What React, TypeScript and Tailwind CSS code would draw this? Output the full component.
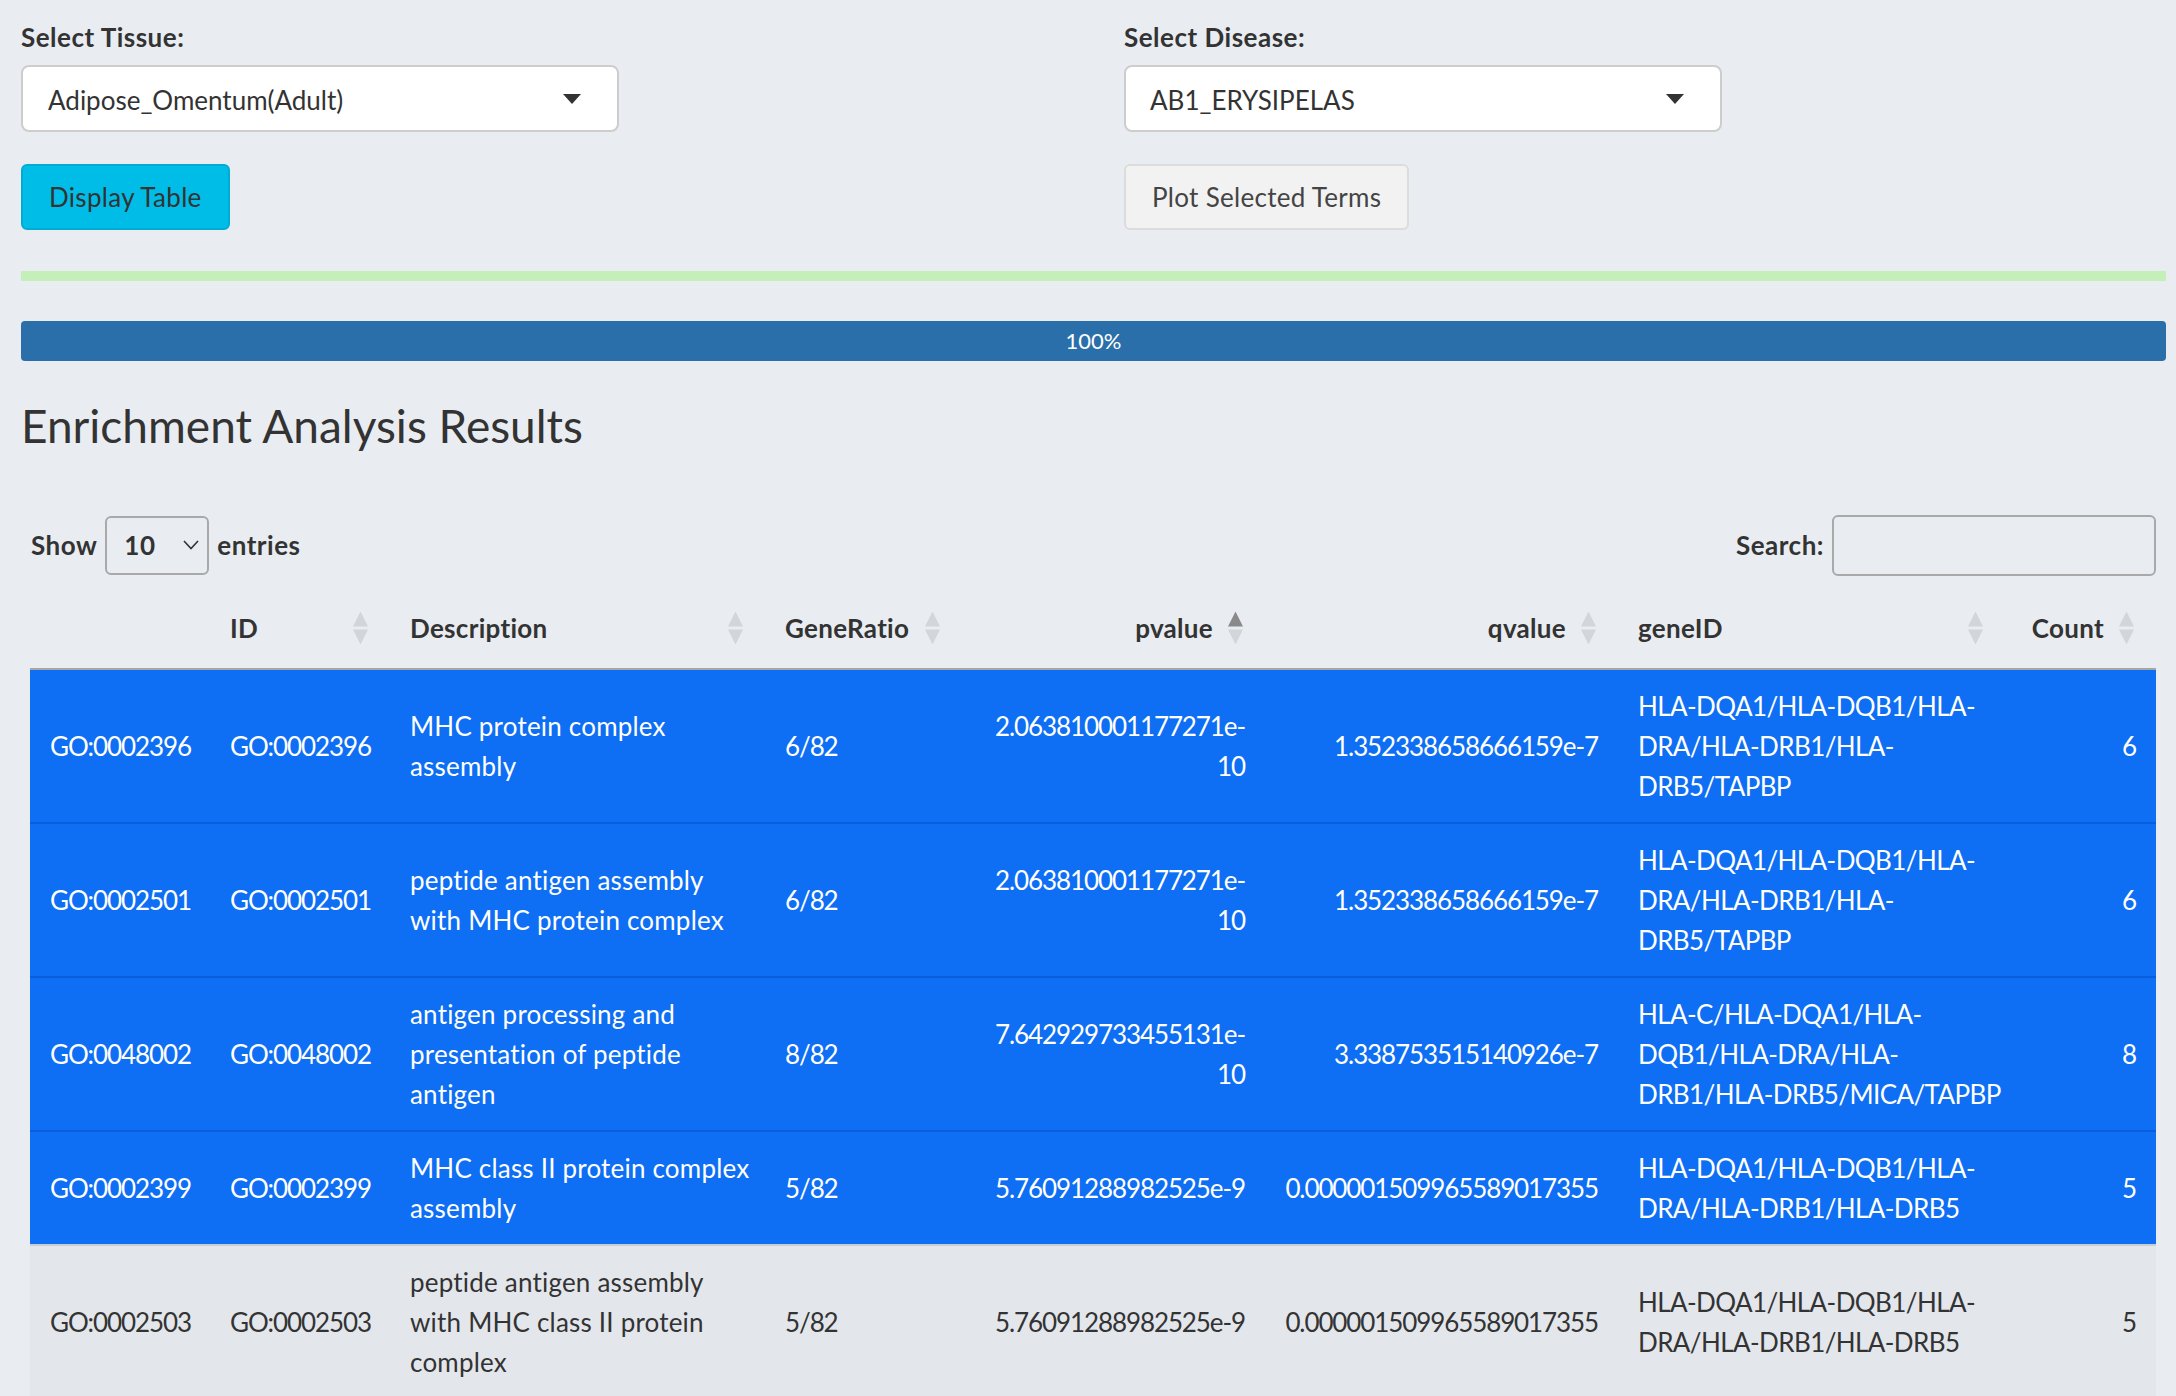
import { JSX } from "react";

type Row = {
    rn: string;
    desc: string[];
    ratio: string;
    p: string[];
    q: string;
    gene: string[];
    count: string;
    selected: boolean;
};

const rows: Row[] = [
    {
        rn: "GO:0002396",
        desc: ["MHC protein complex", "assembly"],
        ratio: "6/82",
        p: ["2.063810001177271e-", "10"],
        q: "1.352338658666159e-7",
        gene: ["HLA-DQA1/HLA-DQB1/HLA-", "DRA/HLA-DRB1/HLA-", "DRB5/TAPBP"],
        count: "6",
        selected: true,
    },
    {
        rn: "GO:0002501",
        desc: ["peptide antigen assembly", "with MHC protein complex"],
        ratio: "6/82",
        p: ["2.063810001177271e-", "10"],
        q: "1.352338658666159e-7",
        gene: ["HLA-DQA1/HLA-DQB1/HLA-", "DRA/HLA-DRB1/HLA-", "DRB5/TAPBP"],
        count: "6",
        selected: true,
    },
    {
        rn: "GO:0048002",
        desc: ["antigen processing and", "presentation of peptide", "antigen"],
        ratio: "8/82",
        p: ["7.642929733455131e-", "10"],
        q: "3.338753515140926e-7",
        gene: ["HLA-C/HLA-DQA1/HLA-", "DQB1/HLA-DRA/HLA-", "DRB1/HLA-DRB5/MICA/TAPBP"],
        count: "8",
        selected: true,
    },
    {
        rn: "GO:0002399",
        desc: ["MHC class II protein complex", "assembly"],
        ratio: "5/82",
        p: ["5.76091288982525e-9"],
        q: "0.000001509965589017355",
        gene: ["HLA-DQA1/HLA-DQB1/HLA-", "DRA/HLA-DRB1/HLA-DRB5"],
        count: "5",
        selected: true,
    },
    {
        rn: "GO:0002503",
        desc: ["peptide antigen assembly", "with MHC class II protein", "complex"],
        ratio: "5/82",
        p: ["5.76091288982525e-9"],
        q: "0.000001509965589017355",
        gene: ["HLA-DQA1/HLA-DQB1/HLA-", "DRA/HLA-DRB1/HLA-DRB5"],
        count: "5",
        selected: false,
    },
];

function SortIcon({ active }: { active?: boolean }) {
    return (
        <svg width="15" height="33" viewBox="0 0 15 33" className="absolute right-[22px] top-1/2 -translate-y-1/2">
            <polygon points="0,15 7.5,0 15,15" fill={active ? "#8a8a8a" : "#d2d5d9"} />
            <polygon points="0,18 15,18 7.5,33" fill="#d2d5d9" />
        </svg>
    );
}

function Caret() {
    return (
        <svg width="18" height="10" viewBox="0 0 18 10">
            <polygon points="0,0 18,0 9,10" fill="#333" />
        </svg>
    );
}

function Lines({ lines }: { lines: string[] }) {
    return (
        <>
            {lines.map((l, i) => (
                <div key={i} className="whitespace-nowrap">{l}</div>
            ))}
        </>
    );
}

function Header({ label, align, active, sortable = true }: { label: string; align: "left" | "right"; active?: boolean; sortable?: boolean }) {
    return (
        <th className={`relative py-5 pl-5 pr-[52px] font-bold leading-[40px] tracking-[0.3px] whitespace-nowrap ${align === "right" ? "text-right" : "text-left"}`}>
            {label}
            {sortable && <SortIcon active={active} />}
        </th>
    );
}

export default function App(): JSX.Element {
    return (
        <div className="min-h-screen bg-[#e9edf2] pl-[21px] pr-[10px] pt-[17px] text-[26px] text-[#333] font-['Lato','Noto_Sans',sans-serif]">
            <div className="flex">
                <div className="w-[1103px]">
                    <label className="block font-bold leading-[40px] tracking-[0.5px] mb-2">Select Tissue:</label>
                    <div className="flex h-[67px] w-[598px] items-center justify-between rounded-lg border-2 border-[#cdcdcd] bg-white pl-[25px] pr-[36px]">
                        <span className="pt-1">Adipose_Omentum(Adult)</span>
                        <Caret />
                    </div>
                    <button className="mt-8 h-[66px] rounded-md border-2 border-[#00acd6] bg-[#00bde8] px-[26px] tracking-[0.3px] text-[#333]">Display Table</button>
                </div>
                <div className="flex-1">
                    <label className="block font-bold leading-[40px] tracking-[0.5px] mb-2">Select Disease:</label>
                    <div className="flex h-[67px] w-[598px] items-center justify-between rounded-lg border-2 border-[#cdcdcd] bg-white pl-[24px] pr-[36px]">
                        <span className="pt-1">AB1_ERYSIPELAS</span>
                        <Caret />
                    </div>
                    <button className="mt-8 h-[66px] rounded-md border-2 border-[#dcdcdc] bg-[#f2f2f2] px-[26px] tracking-[0.3px] text-[#444]">Plot Selected Terms</button>
                </div>
            </div>

            <div className="mt-[41px] h-[10px] bg-[#c4efb9]" />
            <div className="mt-[40px] h-[40px] rounded-[4px] bg-[#2a6fa9] text-center text-[22px] leading-[40px] text-white">100%</div>

            <h3 className="mt-[37px] text-[46px] leading-[56px]">Enrichment Analysis Results</h3>

            <div className="ml-[9px] mr-[10px] mt-[60px]">
                <div className="flex h-[62px] items-center justify-between">
                    <div className="flex items-center font-bold tracking-[0.5px]">
                        <span className="ml-px">Show</span>
                        <div className="mx-2 flex h-[59px] w-[104px] items-center justify-between rounded-md border-2 border-[#a9a9a9] pl-[17px] pr-[8px]">
                            <span>10</span>
                            <svg width="16" height="10" viewBox="0 0 16 10">
                                <polyline points="1,1 8,8.5 15,1" fill="none" stroke="#333" strokeWidth="1.6" />
                            </svg>
                        </div>
                        <span>entries</span>
                    </div>
                    <div className="flex items-center font-bold tracking-[0.5px]">
                        <span className="mr-2">Search:</span>
                        <div className="h-[61px] w-[324px] rounded-md border-2 border-[#a9a9a9]" />
                    </div>
                </div>

                <table className="mt-3 w-full table-fixed border-collapse">
                    <colgroup>
                        <col className="w-[180px]" />
                        <col className="w-[180px]" />
                        <col className="w-[375px]" />
                        <col className="w-[197px]" />
                        <col className="w-[303px]" />
                        <col className="w-[353px]" />
                        <col className="w-[387px]" />
                        <col className="w-[151px]" />
                    </colgroup>
                    <thead>
                        <tr className="border-b-2 border-[#a6a6a6]">
                            <Header label="" align="left" sortable={false} />
                            <Header label="ID" align="left" />
                            <Header label="Description" align="left" />
                            <Header label="GeneRatio" align="left" />
                            <Header label="pvalue" align="right" active />
                            <Header label="qvalue" align="right" />
                            <Header label="geneID" align="left" />
                            <Header label="Count" align="right" />
                        </tr>
                    </thead>
                    <tbody>
                        {rows.map((r, i) => {
                            const td = `px-5 py-4 align-middle leading-[40px] ${i === 0 ? "" : r.selected ? "border-t-2 border-[#0a5edb]" : "border-t-2 border-[#c9ced4]"}`;
                            const num = `${td} tracking-[-1.1px]`;
                            return (
                                <tr key={i} className={r.selected ? "bg-[#0e6ef4] text-white" : "bg-[#e3e7ec] text-[#333]"}>
                                    <td className={num}>{r.rn}</td>
                                    <td className={num}>{r.rn}</td>
                                    <td className={`${td} tracking-[0.2px]`}><Lines lines={r.desc} /></td>
                                    <td className={num}>{r.ratio}</td>
                                    <td className={`${num} text-right`}><Lines lines={r.p} /></td>
                                    <td className={`${num} text-right whitespace-nowrap`}>{r.q}</td>
                                    <td className={`${td} tracking-[-0.6px]`}><Lines lines={r.gene} /></td>
                                    <td className={`${num} text-right`}>{r.count}</td>
                                </tr>
                            );
                        })}
                    </tbody>
                </table>
            </div>
        </div>
    );
}
